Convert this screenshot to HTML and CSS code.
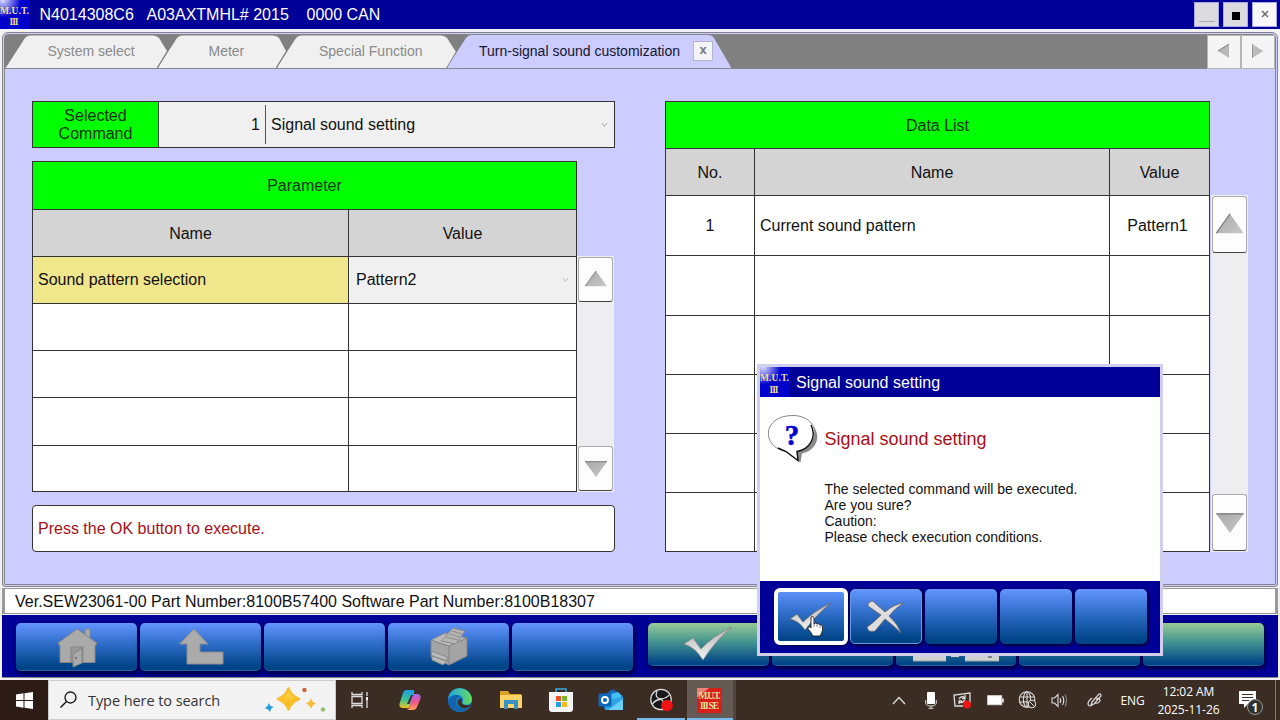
FILE: index.html
```html
<!DOCTYPE html>
<html lang="en">
<head>
<meta charset="utf-8">
<title>M.U.T.-III SE</title>
<link rel="stylesheet" href="styles.css">
</head>
<body>
<svg class="defs" width="0" height="0">
  <defs>
    <linearGradient id="metal" x1="0" y1="0" x2="0" y2="1"><stop offset="0" stop-color="#b5b5b5"/><stop offset="1" stop-color="#f2f2f2"/></linearGradient>
    <linearGradient id="arrow" x1="0" y1="0" x2="1" y2="1"><stop offset="0" stop-color="#a8a8a8"/><stop offset="1" stop-color="#c8c8c8"/></linearGradient>
    <radialGradient id="mutbg" cx="0.1" cy="0" r="0.6"><stop offset="0" stop-color="#dcdcff"/><stop offset="1" stop-color="#0000cc"/></radialGradient>
    <linearGradient id="cop1" x1="0" y1="0" x2="0" y2="1"><stop offset="0" stop-color="#1b9de8"/><stop offset="0.55" stop-color="#3fc48b"/><stop offset="1" stop-color="#f5c321"/></linearGradient>
    <linearGradient id="cop2" x1="0" y1="0" x2="0" y2="1"><stop offset="0" stop-color="#a866ee"/><stop offset="0.5" stop-color="#f0568e"/><stop offset="1" stop-color="#fd9f54"/></linearGradient>
    <linearGradient id="edge1" x1="0" y1="0" x2="1" y2="0"><stop offset="0" stop-color="#22a6e8"/><stop offset="1" stop-color="#63dc5d"/></linearGradient>
    <linearGradient id="star" x1="0" y1="0" x2="0" y2="1"><stop offset="0" stop-color="#ffda55"/><stop offset="1" stop-color="#f5ad10"/></linearGradient>
    <symbol id="mut" viewBox="0 0 30 29">
      <rect width="30" height="29" fill="url(#mutbg)"/>
      <text x="0" y="14" class="mut-text" textLength="29">M.U.T.</text>
      <text x="9.500" y="25" class="mut-text" textLength="9">III</text>
    </symbol>
    <symbol id="up" viewBox="0 0 30 24"><path d="M15 1 30 22H0Z" fill="url(#arrow)"/><path d="M15 1 0 22" stroke="#777" stroke-width="1.200"/></symbol>
    <symbol id="down" viewBox="0 0 30 24"><path d="M15 23 0 2H30Z" fill="url(#arrow)"/><path d="M0 2H30" stroke="#777" stroke-width="1.400"/></symbol>
  </defs>
</svg>

<div class="app">
  <header class="titlebar">
    <svg class="mut-icon" width="30" height="29"><use href="#mut"/></svg>
    <span class="t-vin">N4014308C6</span><span class="t-model">A03AXTMHL# 2015</span><span class="t-can">0000 CAN</span>
    <div class="winbtns">
      <span class="winbtn min"><i></i></span>
      <span class="winbtn max"><i></i></span>
      <span class="winbtn cls"><svg width="8" height="8" viewBox="0 0 8 8"><path d="M1 1 7 7M7 1 1 7" stroke="#666" stroke-width="1.400"/></svg></span>
    </div>
  </header>

  <div class="frame">
    <nav class="tabs">
      <svg class="tab-shapes" width="1204" height="34" viewBox="5 35 1204 34">
        <path d="M276 69 296 38Q298 35.500 301 35.500H441Q445 35.500 447 38L456 52 446 69Z" fill="#f0f0f0"/>
        <path d="M157 69 177 38Q179 35.500 182 35.500H273Q277 35.500 279 38L286 51 275 69Z" fill="#f0f0f0"/>
        <path d="M5 69 25 38Q27 35.500 30 35.500H153Q157 35.500 159 38L167 51 156 69Z" fill="#f0f0f0"/>
        <path d="M167 52 157.500 68M286 52 276.500 68" stroke="#808080" stroke-width="1"/>
        <path d="M446 69 466 38Q468 35 471 35H708Q712 35 714 38L732 69Z" fill="#ccccff"/>
        <path d="M456 52 446 69" stroke="#909090"/>
        <path d="M5 68.500H1209" stroke="#85859a"/>
      </svg>
      <div class="tab-labels">
        <span class="tab w1">System select</span>
        <span class="tab w2">Meter</span>
        <span class="tab w3">Special Function</span>
        <span class="tab w4">Turn-signal sound customization</span>
        <span class="tabx">x</span>
      </div>
      <span class="navbtn"><svg width="13" height="16" viewBox="0 0 13 16"><path d="M12 1V15L1 8Z" fill="#b8b8b8"/><path d="M12 1 1 8" stroke="#777"/></svg></span>
      <span class="navbtn"><svg width="13" height="16" viewBox="0 0 13 16"><path d="M1 1V15L12.500 8Z" fill="#bcbcbc"/><path d="M1.500 1V15" stroke="#999"/></svg></span>
    </nav>

    <main class="panel">
      <section class="left">
        <div class="command">
          <div class="command-label">Selected<br>Command</div>
          <div class="command-no">1</div>
          <div class="command-name">Signal sound setting</div>
          <svg width="7" height="6" viewBox="0 0 7 6"><path d="M1 1 3.500 4.500 6 1" fill="none" stroke="#aaa"/></svg>
        </div>
        <div class="tablewrap">
          <div class="grid params">
            <div class="head wide2">Parameter</div>
            <div class="sub">Name</div><div class="sub">Value</div>
            <div class="cell selected">Sound pattern selection</div>
            <div class="cell combo">Pattern2<svg width="7" height="6" viewBox="0 0 7 6"><path d="M1 1 3.500 4.500 6 1" fill="none" stroke="#bbb"/></svg></div>
            <div class="cell"></div><div class="cell"></div>
            <div class="cell"></div><div class="cell"></div>
            <div class="cell"></div><div class="cell"></div>
            <div class="cell"></div><div class="cell"></div>
          </div>
          <div class="scroll s-left">
            <span class="sbtn"><svg width="22" height="18"><use href="#up"/></svg></span>
            <span class="sbtn"><svg width="22" height="18"><use href="#down"/></svg></span>
          </div>
        </div>
        <div class="message">Press the OK button to execute.</div>
      </section>

      <section class="right">
        <div class="grid data">
          <div class="head wide3">Data List</div>
          <div class="sub">No.</div><div class="sub">Name</div><div class="sub">Value</div>
          <div class="cell mid">1</div><div class="cell">Current sound pattern</div><div class="cell mid val">Pattern1</div>
          <div class="cell"></div><div class="cell"></div><div class="cell"></div>
          <div class="cell"></div><div class="cell"></div><div class="cell"></div>
          <div class="cell"></div><div class="cell"></div><div class="cell"></div>
          <div class="cell"></div><div class="cell"></div><div class="cell"></div>
          <div class="cell"></div><div class="cell"></div><div class="cell"></div>
        </div>
        <div class="scroll s-right">
          <span class="sbtn"><svg width="28" height="22"><use href="#up"/></svg></span>
          <span class="sbtn"><svg width="28" height="22"><use href="#down"/></svg></span>
        </div>
      </section>
    </main>
  </div>

  <div class="status">Ver.SEW23061-00 Part Number:8100B57400 Software Part Number:8100B18307</div>

  <footer class="toolbar">
    <div class="blues">
      <span class="key"><svg width="40" height="42" viewBox="57 626 40 42"><g fill="#aaa" stroke="#858585"><path d="M85 629h5v10h-5z"/><path d="M77 629 58 643 60 646V662.500H95V646L97 643Z"/><path d="M71 647h12v15h-12z" fill="#999"/><path d="M73 654 82 648V663L73 667Z"/></g><circle cx="76" cy="658" r="1.200" fill="#777"/></svg></span>
      <span class="key"><svg width="46" height="38" viewBox="178 628 46 38"><path d="M194 629 179.500 644H187V664H223V652H200V644H208Z" fill="#ababab" stroke="#8c8c8c"/></svg></span>
      <span class="key"></span>
      <span class="key"><svg width="38" height="40" viewBox="429 627 38 40"><g stroke="#858585" stroke-width=".9"><path d="M430 640 448 646 466 638V656L448 665 430 657Z" fill="#a4a4a4"/><path d="M430 640 444 633 466 638 448 646Z" fill="#bbb"/><path d="M440 641 452 628 464 631 455 644Z" fill="#b5b5b5"/><path d="M445 637 457 640M448 634 459 637M451 631 461 634M448 646V665" fill="none"/><path d="M430 651 446 657V661L431 656ZM431 656 446 661 442 665 431 660Z" fill="#bbb"/></g></svg></span>
      <span class="key"></span>
    </div>
    <div class="greens">
      <span class="key green"><svg width="50" height="36" viewBox="682 627 50 36"><path d="M683 645 692 639 700 650Q712 637 731 628 714 642 702 661Q694 648 683 645Z" fill="url(#metal)" stroke="#888" stroke-width=".8"/></svg></span>
      <span class="key green"></span>
      <span class="key green"><svg width="90" height="42" viewBox="0 0 90 42"><path d="M2 8H35V38H2ZM40 8H48V34H40ZM54 8H88V38H54Z" fill="#d0d3d3"/><path d="M2 38H35M54 38H88" stroke="#9ba99b"/><path d="M79 30V35" stroke="#888" stroke-width="4"/></svg></span>
      <span class="key green"></span>
      <span class="key green"></span>
    </div>
  </footer>
</div>

<div class="dialog">
  <div class="dlg-title"><svg width="30" height="30" viewBox="0 0 30 29" preserveAspectRatio="none"><use href="#mut"/></svg><span>Signal sound setting</span></div>
  <div class="dlg-body">
    <svg width="50" height="50" viewBox="767 413 50 50">
      <path d="M794 418C823 421 822 449 801 453.500L799.500 462.500 786 453Z" fill="#8a8a8a"/>
      <path d="M791 415.500C761 416 760 447 785 451.500L797 460.500 796 451.500C821 447 820 415 791 415.500Z" fill="#fff" stroke="#888"/>
      <path d="M810 425C816 437 809 449 796 451.500L797 460.500 785 451.500 777 448" fill="none" stroke="#111" stroke-width="1.400"/>
      <text x="791" y="444.500" text-anchor="middle" class="question">?</text>
    </svg>
    <div class="dlg-text">
      <h1>Signal sound setting</h1>
      <p>The selected command will be executed.<br>Are you sure?<br>Caution:<br>Please check execution conditions.</p>
    </div>
  </div>
  <div class="dlg-keys">
    <span class="dkey focus"><svg width="44" height="30" viewBox="788 603 44 30"><path d="M789 620 796 615 802 623Q814 611 830 604 815 616 804 631Q798 622 789 620Z" fill="url(#metal)" stroke="#666" stroke-width=".8"/></svg></span>
    <span class="dkey soft"><svg width="40" height="34" viewBox="867 601 40 34"><path d="M869 605Q873 599 877 605L886 613Q895 605 905 604 896 609 890 617 899 625 902 634 894 626 886 620L876 632Q869 634 868 628 873 625 882 616L869 607Z" fill="#dedede" stroke="#666" stroke-width=".9"/></svg></span>
    <span class="dkey"></span><span class="dkey"></span><span class="dkey"></span>
  </div>
</div>

<svg class="cursor" width="16" height="22" viewBox="0 0 16 22"><path d="M4 2Q6 0 7 3V9Q9 7 10 9 12 8 13 10 15 9 15.500 12V15Q15 18 13 21H6Q4 17 1 14 0 11 3 12L4 13Z" fill="#fff" stroke="#222" stroke-width=".9"/><path d="M7 9V12M10 9.500V12M13 10.500V13" stroke="#555" stroke-width=".7"/></svg>

<div class="taskbar">
  <span class="start"><svg width="17" height="17" viewBox="0 0 17 17"><path d="M0 2.500 7.500 1.300V8H0ZM8.500 1.200 17 0V8H8.500ZM0 9H7.500V15.700L0 14.500ZM8.500 9H17V17L8.500 15.800Z" fill="#fff"/></svg></span>
  <div class="search">
    <svg width="17" height="17" viewBox="0 0 17 17"><circle cx="10.500" cy="6.500" r="5.500" fill="none" stroke="#111" stroke-width="1.300"/><path d="M6.500 10.500 0.500 16.500" stroke="#111" stroke-width="1.400"/></svg>
    <span>Type here to search</span>
    <svg class="sparkle" width="62" height="26" viewBox="264 687 62 26"><path d="M288.500 688.500Q291 696 299 699 291 702 288.500 709.500 286 702 278 699 286 696 288.500 688.500Z" fill="url(#star)" stroke="#f9bf2c" stroke-width="2.500" stroke-linejoin="round"/><path d="M311 698Q312 702 316 703.500 312 705 311 709 310 705 306 703.500 310 702 311 698Z" fill="#f6bd38"/><path d="M269 703 270.500 706 273.500 707 271 709 270 712 267.500 709 264.500 708.500 267.500 706Z" fill="#229fdc"/><circle cx="304.500" cy="690" r="2.200" fill="#d2603c"/><circle cx="323" cy="709.500" r="2.200" fill="#91bf72"/></svg>
  </div>
  <div class="apps">
    <span class="appi"><svg width="18" height="18" viewBox="0 0 18 18"><g fill="none" stroke="#ddd" stroke-width="1.300"><path d="M1 5.500H11V12.500H1ZM1 1V3.500H11V1M1 17V14.500H11V17M16 1V5M16 9V17"/></g><path d="M15 6h2v3h-2z" fill="#fff"/></svg></span>
    <span class="appi"><svg width="24" height="24" viewBox="0 0 24 24"><path d="M8 2H15Q17 2 16 5L12 18Q11 21 8 20H4Q0 19 2 14L5 5Q6 2 8 2Z" fill="url(#cop1)"/><path d="M16 6H20Q24 7 22 12L19 19Q18 22 15 22H9Q11 21 12 18L14 9Q14.500 6 16 6Z" fill="url(#cop2)"/><path d="M13 7H15L11.500 16H9Z" fill="#3b2c44"/></svg></span>
    <span class="appi"><svg width="26" height="26" viewBox="0 0 26 26"><circle cx="13" cy="13" r="12" fill="#167fcf"/><path d="M1.500 11C3-2 23-2 25 12 25 17 20 19 16 17 14 16 17 15 16 12 15 7 6 6 1.500 11Z" fill="url(#edge1)"/><path d="M13 9C6 13 9 23 20 22 12 28 1 23 1 14 4 8 9 7 13 9Z" fill="#1264ac"/><path d="M15 12C13 17 18 20 24 17 22 22 16 23 12 19 9 15 12 10 15 12Z" fill="#3b2c24"/></svg></span>
    <span class="appi"><svg width="24" height="20" viewBox="0 0 24 20"><path d="M1 1H9L11 4H22V8H1Z" fill="#dca127"/><path d="M1 5H23V18H1Z" fill="#fbd467"/><path d="M5 10H19V19H15V14H9V19H5Z" fill="#3a91c4"/></svg></span>
    <span class="appi"><svg width="26" height="26" viewBox="0 0 26 26"><path d="M8 6V2H18V6" fill="none" stroke="#3ba8df" stroke-width="1.500"/><path d="M1 5H25V22Q25 25 22 25H4Q1 25 1 22Z" fill="#f4f4f4"/><path d="M8 9h5v5H8z" fill="#e9532c"/><path d="M14 9h5v5h-5z" fill="#7fb52d"/><path d="M8 15h5v5H8z" fill="#24a2df"/><path d="M14 15h5v5h-5z" fill="#f5b81f"/></svg></span>
    <span class="appi"><svg width="26" height="24" viewBox="0 0 26 24"><path d="M6 7 15 1 25 8V21H6Z" fill="#1768ba"/><path d="M9 7 20 4 24 8 12 18Z" fill="#42c2f2"/><path d="M8 12 25 9V21Q25 22 23 22H7Z" fill="#30a4e7"/><path d="M10 22 25 11V22Z" fill="#67d1f6"/><rect x="0.500" y="5.500" width="13" height="13" rx="1.500" fill="#1067b8"/><circle cx="7" cy="12" r="3" fill="none" stroke="#fff" stroke-width="1.800"/></svg></span>
    <span class="appi running"><svg width="26" height="26" viewBox="0 0 26 26"><circle cx="13" cy="12.500" r="10.800" fill="#ddd"/><circle cx="13" cy="12.500" r="9.600" fill="#18181b"/><g fill="none" stroke="#ddd" stroke-width="1.300"><path d="M9 4Q6 11 13 12 19 11 21 8"/><path d="M13 12Q18 16 14 22"/><path d="M13 12Q7 13 4.500 17"/></g><circle cx="19" cy="18.500" r="5.800" fill="#f31212"/></svg></span>
    <span class="appi running active"><svg width="25" height="25" viewBox="0 0 25 25"><rect width="25" height="25" fill="#d81e18"/><path d="M0 0H12L0 10Z" fill="#ee8178"/><text x="1.500" y="11" class="mut-text" textLength="22">M.U.T.</text><text x="3" y="20.500" class="mut-text" textLength="19">III SE</text></svg></span>
  </div>
  <div class="tray">
    <span><svg width="14" height="9" viewBox="0 0 14 9"><path d="M1 8 7 1.500 13 8" fill="none" stroke="#ddd" stroke-width="1.300"/></svg></span>
    <span><svg width="12" height="18" viewBox="0 0 12 18"><rect x="2" y="1" width="8" height="12" rx="1" fill="#fff"/><path d="M.7 9V12Q1 15 6 15 11 15 11.300 12V9M6 15V17M3.500 17.300H8.500" fill="none" stroke="#ddd"/></svg></span>
    <span><svg width="20" height="17" viewBox="0 0 20 17"><path d="M17 12V1L1 3 2 14H10" fill="none" stroke="#ddd" stroke-width="1.300"/><path d="M6 7Q9 3 12 6M12 3V6.500H9M12 8Q9 12 6 10M6 12V9H9" fill="none" stroke="#ddd" stroke-width="1.300"/><circle cx="14" cy="12.500" r="4" fill="#ee1515"/></svg></span>
    <span><svg width="17" height="11" viewBox="0 0 17 11"><rect x=".7" y=".7" width="14" height="9" fill="#fff" stroke="#ddd"/><path d="M16 3.500V7.500" stroke="#fff" stroke-width="1.500"/></svg></span>
    <span><svg width="18" height="18" viewBox="0 0 18 18"><g fill="none" stroke="#ddd" stroke-width="1.100"><circle cx="9" cy="8.500" r="7.800"/><ellipse cx="9" cy="8.500" rx="3.600" ry="7.800"/><path d="M1.500 6H16.500M1.500 11H11M9 1V16"/></g><circle cx="14" cy="13" r="3.700" fill="#3b2c24" stroke="#ddd" stroke-width="1.100"/><path d="M11.500 10.500 16.500 15.500" stroke="#ddd"/></svg></span>
    <span><svg width="17" height="15" viewBox="0 0 17 15"><g fill="none" stroke="#ddd" stroke-width="1.100"><path d="M1 5H3.500L7 1.500V13.500L3.500 10H1ZM9 5Q10.500 7.500 9 10M11.500 3Q14 7.500 11.500 12"/><path d="M14 1.500Q17 7.500 14 13.500" stroke="#888"/></g></svg></span>
    <span class="pen"><svg width="16" height="16" viewBox="0 0 16 16"><path d="M5 10 12 2Q14 1 14 4L7 12 4 13ZM5 6Q1 9 1 12 2 16 6 12M9 7Q13 5 13 9 11 12 8 11" fill="none" stroke="#ddd" stroke-width="1.200"/></svg></span>
    <span class="lang">ENG</span>
    <span class="clock"><b>12:02 AM</b><b>2025-11-26</b></span>
    <span class="notif"><svg width="26" height="26" viewBox="0 0 26 26"><path d="M1 1H18V14H10L6 18V14H1Z" fill="#fff"/><path d="M4 4.500H15M4 7.500H15M4 10.500H11" stroke="#3b2c24" stroke-width="1.200"/><circle cx="17" cy="17" r="7.500" fill="#30302f" stroke="#999"/><text x="17" y="21.500" text-anchor="middle" class="badge">1</text></svg></span>
  </div>
</div>
</body>
</html>
```
FILE: styles.css
```css
* { box-sizing: border-box; }
body {
  margin: 0; width: 1280px; height: 720px; overflow: hidden;
  position: relative; background: #3b2c24;
  font-family: "Liberation Sans", Arial, sans-serif; font-size: 16px; color: #111;
}
svg { display: block; flex: none; }
.defs { position: absolute; }
.mut-text { font: bold 9.5px "Liberation Serif", serif; fill: #e6de98; }

.app { height: 680px; background: #f2f2f6; display: flex; flex-direction: column; }

/* title bar */
.titlebar { height: 29px; background: #000099; color: #fff; display: flex; align-items: center; flex: none; }
.t-vin { margin-left: 9.5px; width: 107px; }
.t-model { width: 160px; white-space: nowrap; }
.winbtns { margin-left: auto; display: flex; gap: 4px; padding-right: 3px; }
.winbtn { width: 25px; height: 25px; margin-bottom: 1px; background: #dcdce0; border: 1px solid #aaaae8; display: flex; align-items: center; justify-content: center; }
.min i { width: 16px; height: 1.5px; background: #aaa; margin-top: 15px; }
.max i { width: 8px; height: 8px; background: #000; margin-top: 3px; }
.cls { background: #f8f8fa; }
.cls svg { margin-top: -1px; }

/* tabbed frame */
.frame {
  margin: 3px 2px 0; height: 555px; flex: none; display: flex; flex-direction: column;
  border: 3px double #858589; border-radius: 6px 6px 3px 3px; background: #ccccff;
}
.tabs { height: 34px; display: flex; background: #808080; position: relative; flex: none; }
.tab-shapes { position: absolute; left: 0; top: 0; }
.tab-labels { width: 1203px; position: relative; display: flex; align-items: center; font-size: 14px; color: #8a8a8a; white-space: nowrap; padding-bottom: 2px; }
.w1 { width: 161px; margin-left: 42.5px; }
.w2 { width: 110.5px; }
.w3 { width: 160px; }
.w4 { width: 214px; color: #151530; }
.tabx { width: 20px; height: 20px; border: 1px solid #b5b5d0; background: #f3f3f8; display: flex; align-items: center; justify-content: center; font-weight: bold; font-size: 13px; line-height: 14px; padding-bottom: 3px; color: #777; }
.navbtn { position: relative; width: 34px; height: 34px; background: #f5f5f5; border: 1px solid #b5b5b5; display: flex; align-items: center; justify-content: center; }
.navbtn svg { margin-top: -2px; margin-right: 1px; }

.panel { flex: 1; display: flex; gap: 50px; padding: 32px 0 0 27px; background: #ccccff; }
.left { width: 583px; }
.right { display: flex; align-items: flex-start; gap: 1px; }

.command { height: 47px; border: 1px solid #333; background: #f0f0f0; display: flex; align-items: center; }
.command-label { width: 126px; height: 45px; background: #00ff00; border-right: 1px solid #444; color: #103010; text-align: center; line-height: 18px; padding-top: 5px; }
.command-no { width: 107px; height: 39px; line-height: 39px; text-align: right; padding-right: 5px; border-right: 1px solid #555; }
.command-name { flex: 1; padding-left: 5px; }
.command svg { margin-right: 6px; }

.tablewrap { display: flex; margin-top: 13px; }
.grid { display: grid; gap: 1px; border: 1px solid #333; background: #333; }
.params { width: 545px; grid-template-columns: 315px 227px; grid-template-rows: 47px 46px 46px 46px 46px 47px 45px; }
.data { width: 545px; grid-template-columns: 88px 354px 99px; grid-template-rows: 46px 46px 59px 59px 58px 58px 58px 58px; }
.head, .sub { display: flex; align-items: center; justify-content: center; padding-top: 1px; }
.head { background: #00ff00; color: #103010; }
.wide2 { grid-column: span 2; }
.wide3 { grid-column: span 3; }
.sub { background: #d4d4d4; }
.cell { background: #fff; display: flex; align-items: center; padding: 1px 5px 0; }
.selected { background: #f0e68c; padding-top: 0; padding-bottom: 1px; }
.combo { background: #f0f0f0; justify-content: space-between; padding: 0 7px 1px; }
.mid { justify-content: center; }
.val { padding-right: 9px; }

.scroll { background: #eeeef0; display: flex; flex-direction: column; justify-content: space-between; width: 37px; padding: 1px; }
.sbtn { display: flex; align-items: center; justify-content: center; background: #fdfdfd; border: 1px solid #aaa; border-bottom-color: #444; border-radius: 3px; width: 35px; padding-bottom: 1px; }
.sbtn + .sbtn { padding-bottom: 0; }
.s-left { height: 236px; margin-top: 95px; }
.s-left .sbtn { height: 45px; }
.s-right { height: 357px; margin-top: 94px; }
.s-right .sbtn { height: 57px; }

.message { margin-top: 13px; height: 47px; line-height: 46px; border: 1px solid #333; border-radius: 4px; background: #fff; color: #a51018; padding-left: 5px; }

/* version line */
.status { margin: 1px 2px 0; height: 26px; line-height: 25px; border: 1px solid #999; border-width: 1px 3px; background: #fff; padding-left: 10px; white-space: nowrap; flex: none; }

/* tool bar */
.toolbar { margin: 1px 2px 0; height: 62px; background: #000099; display: flex; align-items: flex-start; gap: 15px; padding: 8px 0 0 14px; flex: none; box-shadow: 0 1px 0 #888; }
.blues, .greens { display: flex; gap: 3px; }
.key { width: 121px; height: 48px; border-radius: 5px; background: linear-gradient(#6495ff, #3371ce 40%, #004488 92%); box-shadow: 1px 2px 4px 1px #00003c; border-bottom: 1px solid #2460a4; display: flex; align-items: center; justify-content: center; }
.greens .key { width: 120.8px; height: 43px; background: linear-gradient(#98cc98, #4b9a90 40%, #004488 97%); }

/* confirmation dialog */
.dialog { position: absolute; left: 757px; top: 364px; width: 406px; height: 292px; border: 3px solid #d0d0ee; background: #fff; display: flex; flex-direction: column; }
.dlg-title { height: 30px; background: #000099; color: #fff; display: flex; align-items: center; gap: 6px; }
.dlg-title span { padding-top: 2px; }
.dlg-body { height: 184px; display: flex; gap: 6.5px; padding: 16px 0 0 8px; }
.dlg-text h1 { margin: 14px 0 0; font-size: 18px; line-height: 24px; font-weight: normal; color: #a51018; }
.dlg-text p { margin: 30px 0 0; font-size: 14px; line-height: 16px; white-space: nowrap; }
.dlg-keys { flex: 1; background: #000099; display: flex; gap: 3px; padding: 8px 0 0 15px; }
.dkey { width: 72px; height: 55px; border-radius: 5px; background: linear-gradient(#6495ff, #3371ce 40%, #004488 92%); box-shadow: 1px 1px 3px 1px #00003c; display: flex; align-items: center; justify-content: center; }
.focus { outline: 4px solid #fff; outline-offset: -3px; }
.soft { border: 1px solid #6a98e8; }
.cursor { position: absolute; left: 807px; top: 615px; z-index: 2; }

/* taskbar */
.taskbar { height: 40px; display: flex; background: #3b2c24; color: #fff; font-family: "Open Sans", "Noto Sans", sans-serif; }
.start { width: 48px; background: #2c1c15; display: flex; align-items: center; justify-content: center; }
.search { width: 288px; background: #f3f3f3; border: 1px solid #ccc; color: #333; display: flex; align-items: center; padding-left: 11px; font-size: 14.5px; white-space: nowrap; }
.search span { width: 176px; margin-left: 11px; letter-spacing: -0.07px; }
.search svg:first-child { margin-bottom: 2px; }
.apps { display: flex; gap: 2px; }
.appi { width: 48.2px; display: flex; align-items: center; justify-content: center; }
.running { box-shadow: inset 0 -2px #76b9ed; }
.active { background: #655a54; border-right: 3px solid #51453e; }
.tray { margin-left: auto; display: flex; width: 397px; }
.tray span { width: 32px; display: flex; align-items: center; justify-content: center; flex: none; }
.tray .pen { width: 40px; }
.tray .lang { width: 35px; font-size: 12px; letter-spacing: -0.2px; }
.tray .clock { width: 77px; flex-direction: column; font-size: 12px; line-height: 18px; letter-spacing: -0.05px; padding-top: 1px; }
.clock b { font-weight: normal; white-space: nowrap; }
.tray .notif { width: 49px; border-right: 1px solid #887a72; padding-top: 6px; }
.question { font: bold 29px "Liberation Serif", serif; fill: #0000d0; stroke: #0000d0; stroke-width: .6px; }
.badge { font: bold 12px "Open Sans", sans-serif; fill: #fff; }
```
